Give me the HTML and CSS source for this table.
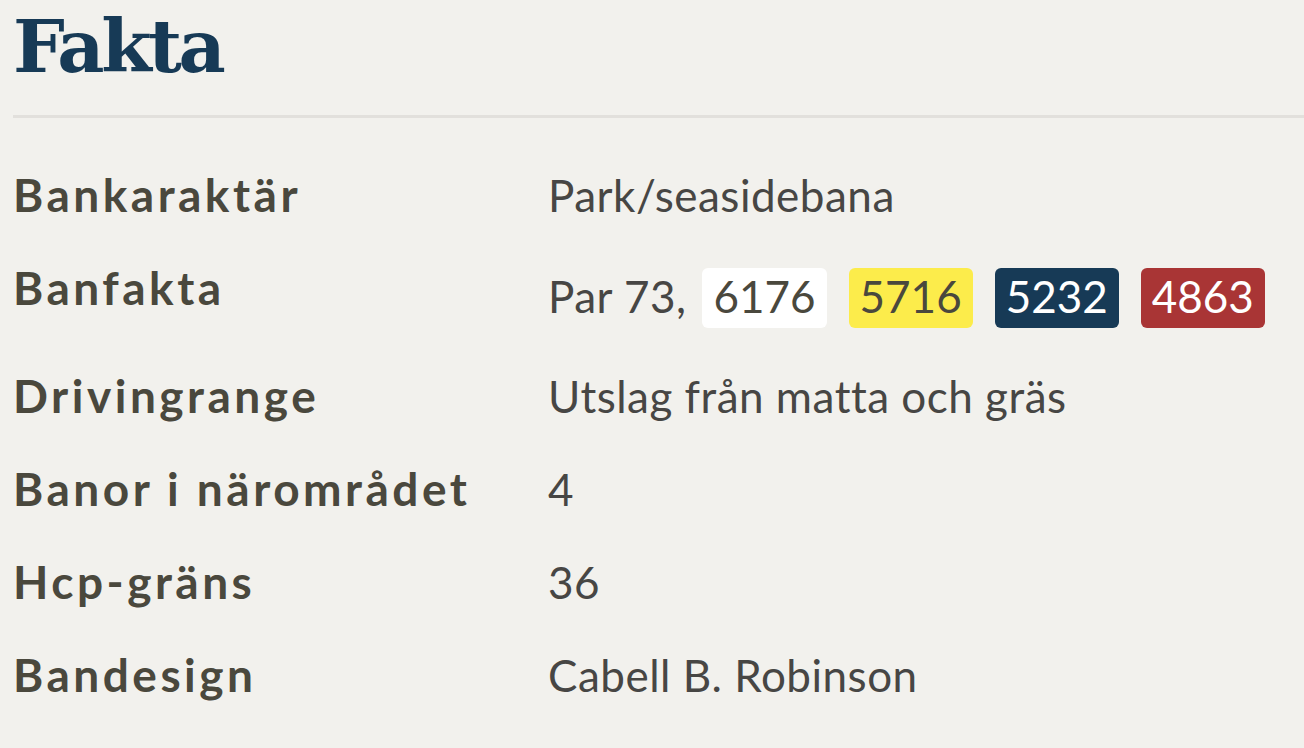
FILE: index.html
```html
<!DOCTYPE html>
<html lang="sv">
<head>
<meta charset="utf-8">
<title>Fakta</title>
<link rel="stylesheet" href="styles.css">
</head>
<body>
<section class="panel">
  <h1 class="title">Fakta</h1>
  <div class="divider"></div>
  <div class="facts">
    <div class="row">
      <div class="label">Bankaraktär</div>
      <div class="value">Park/seasidebana</div>
    </div>
    <div class="row">
      <div class="label">Banfakta</div>
      <div class="value">Par 73,<span class="badge badge-white first">6176</span><span class="badge badge-yellow">5716</span><span class="badge badge-blue">5232</span><span class="badge badge-red">4863</span></div>
    </div>
    <div class="row">
      <div class="label">Drivingrange</div>
      <div class="value">Utslag från matta och gräs</div>
    </div>
    <div class="row">
      <div class="label">Banor i närområdet</div>
      <div class="value">4</div>
    </div>
    <div class="row">
      <div class="label">Hcp-gräns</div>
      <div class="value">36</div>
    </div>
    <div class="row">
      <div class="label">Bandesign</div>
      <div class="value">Cabell B. Robinson</div>
    </div>
  </div>
</section>
</body>
</html>
```
FILE: styles.css
```css
html, body {
  margin: 0;
  padding: 0;
  background: #f2f1ed;
}

.panel {
  padding: 10px 0 0 13px;
  font-family: Lato, "Noto Sans", sans-serif;
}

.title {
  margin: 0 0 32px;
  font-family: "DejaVu Serif", "Liberation Serif", serif;
  font-weight: 700;
  font-size: 73px;
  line-height: 73px;
  color: #173a56;
  letter-spacing: -3.5px;
}

.divider {
  height: 3px;
  background: #e2e0dc;
}

.facts {
  margin-top: 31px;
}

.row {
  display: flex;
  align-items: flex-start;
  padding: 11px 0 12px;
}

.label {
  width: 535px;
  flex: none;
  font-weight: 700;
  font-size: 46px;
  line-height: 70px;
  letter-spacing: 3.5px;
  color: #4a483d;
}

.value {
  font-size: 44px;
  line-height: 70px;
  letter-spacing: 0.5px;
  color: #474644;
}

.badge {
  display: inline-block;
  margin: 15px 0 10px 22px;
  padding: 2px 11px 6px;
  line-height: 52px;
  letter-spacing: 0;
  border-radius: 6px;
}

.badge.first {
  margin-left: 16px;
}

.badge-white {
  background: #ffffff;
  color: #4a483d;
}

.badge-yellow {
  background: #fcec4b;
  color: #4a483d;
}

.badge-blue {
  background: #173a56;
  color: #ffffff;
}

.badge-red {
  background: #a93535;
  color: #ffffff;
}
```
